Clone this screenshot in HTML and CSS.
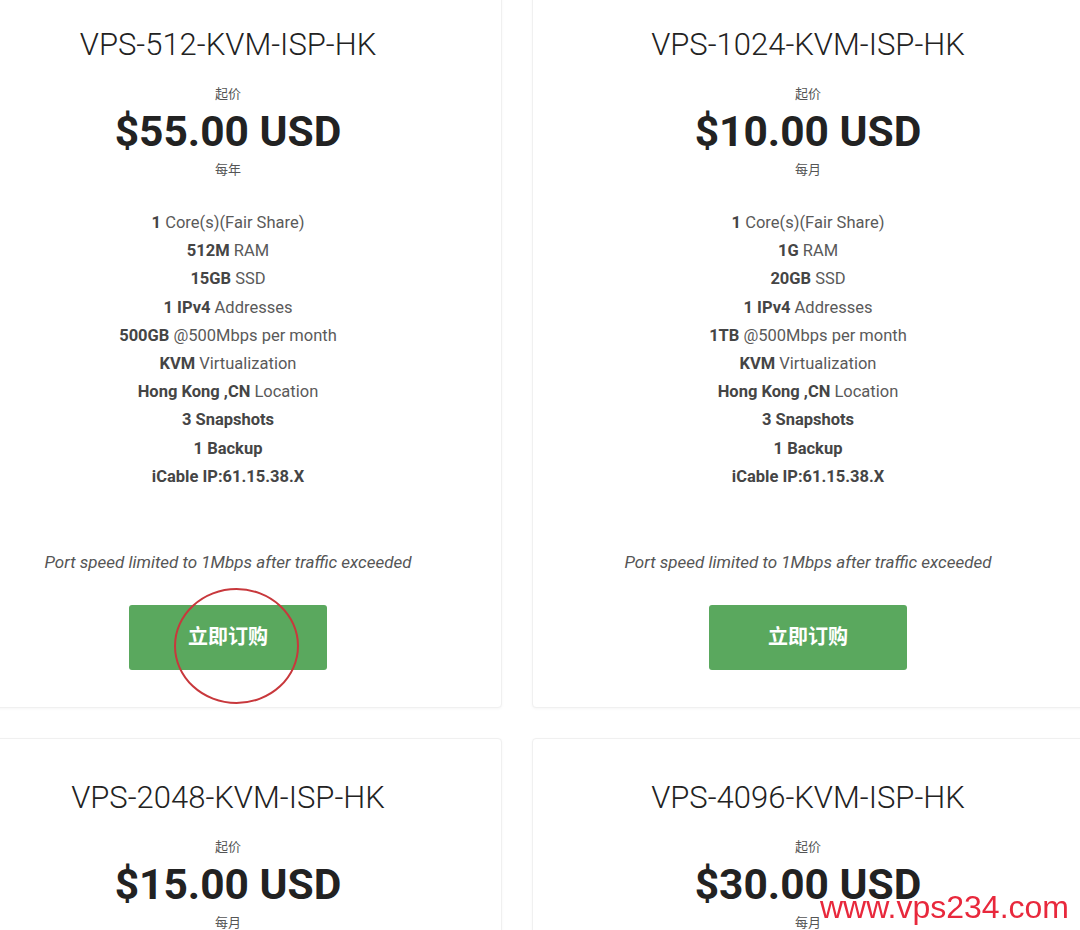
FILE: index.html
```html
<!DOCTYPE html>
<html lang="zh">
<head>
<meta charset="utf-8">
<title>VPS Plans</title>
<link rel="stylesheet" href="styles.css">
</head>
<body>
<div class="grid">
  <div class="card">
    <h3 class="title">VPS-512-KVM-ISP-HK</h3>
    <div class="from">起价</div>
    <div class="price">$55.00 USD</div>
    <div class="cycle">每年</div>
    <ul class="features">
      <li><b>1</b> Core(s)(Fair Share)</li>
      <li><b>512M</b> RAM</li>
      <li><b>15GB</b> SSD</li>
      <li><b>1 IPv4</b> Addresses</li>
      <li><b>500GB</b> @500Mbps per month</li>
      <li><b>KVM</b> Virtualization</li>
      <li><b>Hong Kong ,CN</b> Location</li>
      <li><b>3 Snapshots</b></li>
      <li><b>1 Backup</b></li>
      <li><b>iCable IP:61.15.38.X</b></li>
    </ul>
    <p class="note">Port speed limited to 1Mbps after traffic exceeded</p>
    <div class="action">
      <a class="btn" href="#">立即订购</a>
      <span class="circle"></span>
    </div>
  </div>
  <div class="card">
    <h3 class="title">VPS-1024-KVM-ISP-HK</h3>
    <div class="from">起价</div>
    <div class="price">$10.00 USD</div>
    <div class="cycle">每月</div>
    <ul class="features">
      <li><b>1</b> Core(s)(Fair Share)</li>
      <li><b>1G</b> RAM</li>
      <li><b>20GB</b> SSD</li>
      <li><b>1 IPv4</b> Addresses</li>
      <li><b>1TB</b> @500Mbps per month</li>
      <li><b>KVM</b> Virtualization</li>
      <li><b>Hong Kong ,CN</b> Location</li>
      <li><b>3 Snapshots</b></li>
      <li><b>1 Backup</b></li>
      <li><b>iCable IP:61.15.38.X</b></li>
    </ul>
    <p class="note">Port speed limited to 1Mbps after traffic exceeded</p>
    <div class="action">
      <a class="btn" href="#">立即订购</a>
    </div>
  </div>
  <div class="card">
    <h3 class="title">VPS-2048-KVM-ISP-HK</h3>
    <div class="from">起价</div>
    <div class="price">$15.00 USD</div>
    <div class="cycle">每月</div>
  </div>
  <div class="card">
    <h3 class="title">VPS-4096-KVM-ISP-HK</h3>
    <div class="from">起价</div>
    <div class="price">$30.00 USD</div>
    <div class="cycle">每月</div>
  </div>
</div>
<div class="watermark">www.vps234.com</div>
</body>
</html>
```
FILE: styles.css
```css
html, body {
  margin: 0;
  padding: 0;
  background: #fff;
  overflow: hidden;
}
body {
  font-family: Roboto, "Noto Sans CJK SC", sans-serif;
  color: #555;
}
.grid {
  display: grid;
  grid-template-columns: 548px 552px;
  column-gap: 30px;
  row-gap: 30px;
  margin-left: -46px;
  margin-top: -15px;
}
.card {
  border: 1px solid #f0f0f0;
  border-radius: 4px;
  box-shadow: 0 1px 3px rgba(0,0,0,0.04);
  padding: 41px 20px 37px;
  text-align: center;
  background: #fff;
}
.title {
  margin: 0;
  font-family: Roboto, sans-serif;
  font-weight: 300;
  font-size: 31px;
  line-height: 36px;
  color: #222;
}
.from, .cycle {
  font-family: "Noto Sans CJK SC", sans-serif;
  font-size: 13px;
  line-height: 18px;
  color: #555;
}
.from { margin-top: 21px; }
.price {
  margin-top: 6px;
  font-family: Roboto, sans-serif;
  font-weight: 700;
  font-size: 42.5px;
  line-height: 48px;
  color: #222;
}
.cycle { margin-top: 4px; }
.features {
  list-style: none;
  margin: 31px 0 0;
  padding: 0;
  font-size: 16.5px;
  line-height: 28.2px;
  color: #5a5a5a;
}
.features b {
  font-weight: 700;
  color: #454545;
}
.note {
  margin: 59px 0 0;
  font-style: italic;
  font-size: 17px;
  line-height: 24px;
  color: #555;
}
.action {
  position: relative;
  margin-top: 31px;
  display: flex;
  justify-content: center;
}
.btn {
  display: flex;
  align-items: center;
  justify-content: center;
  width: 198px;
  height: 65px;
  box-sizing: border-box;
  padding-bottom: 4px;
  background: #5aa85e;
  border-radius: 3px;
  color: #fff;
  font-family: "Noto Sans CJK SC", sans-serif;
  font-weight: 700;
  font-size: 20px;
  line-height: 24px;
  text-decoration: none;
}
.circle {
  position: absolute;
  left: 199px;
  top: -17px;
  width: 125px;
  height: 116px;
  border: 2px solid #c8383c;
  border-radius: 50%;
  box-sizing: border-box;
  pointer-events: none;
}
.watermark {
  position: fixed;
  left: 820px;
  top: 889px;
  font-family: "Liberation Sans", Arial, sans-serif;
  font-size: 32px;
  line-height: 36px;
  color: #e8283c;
}
```
